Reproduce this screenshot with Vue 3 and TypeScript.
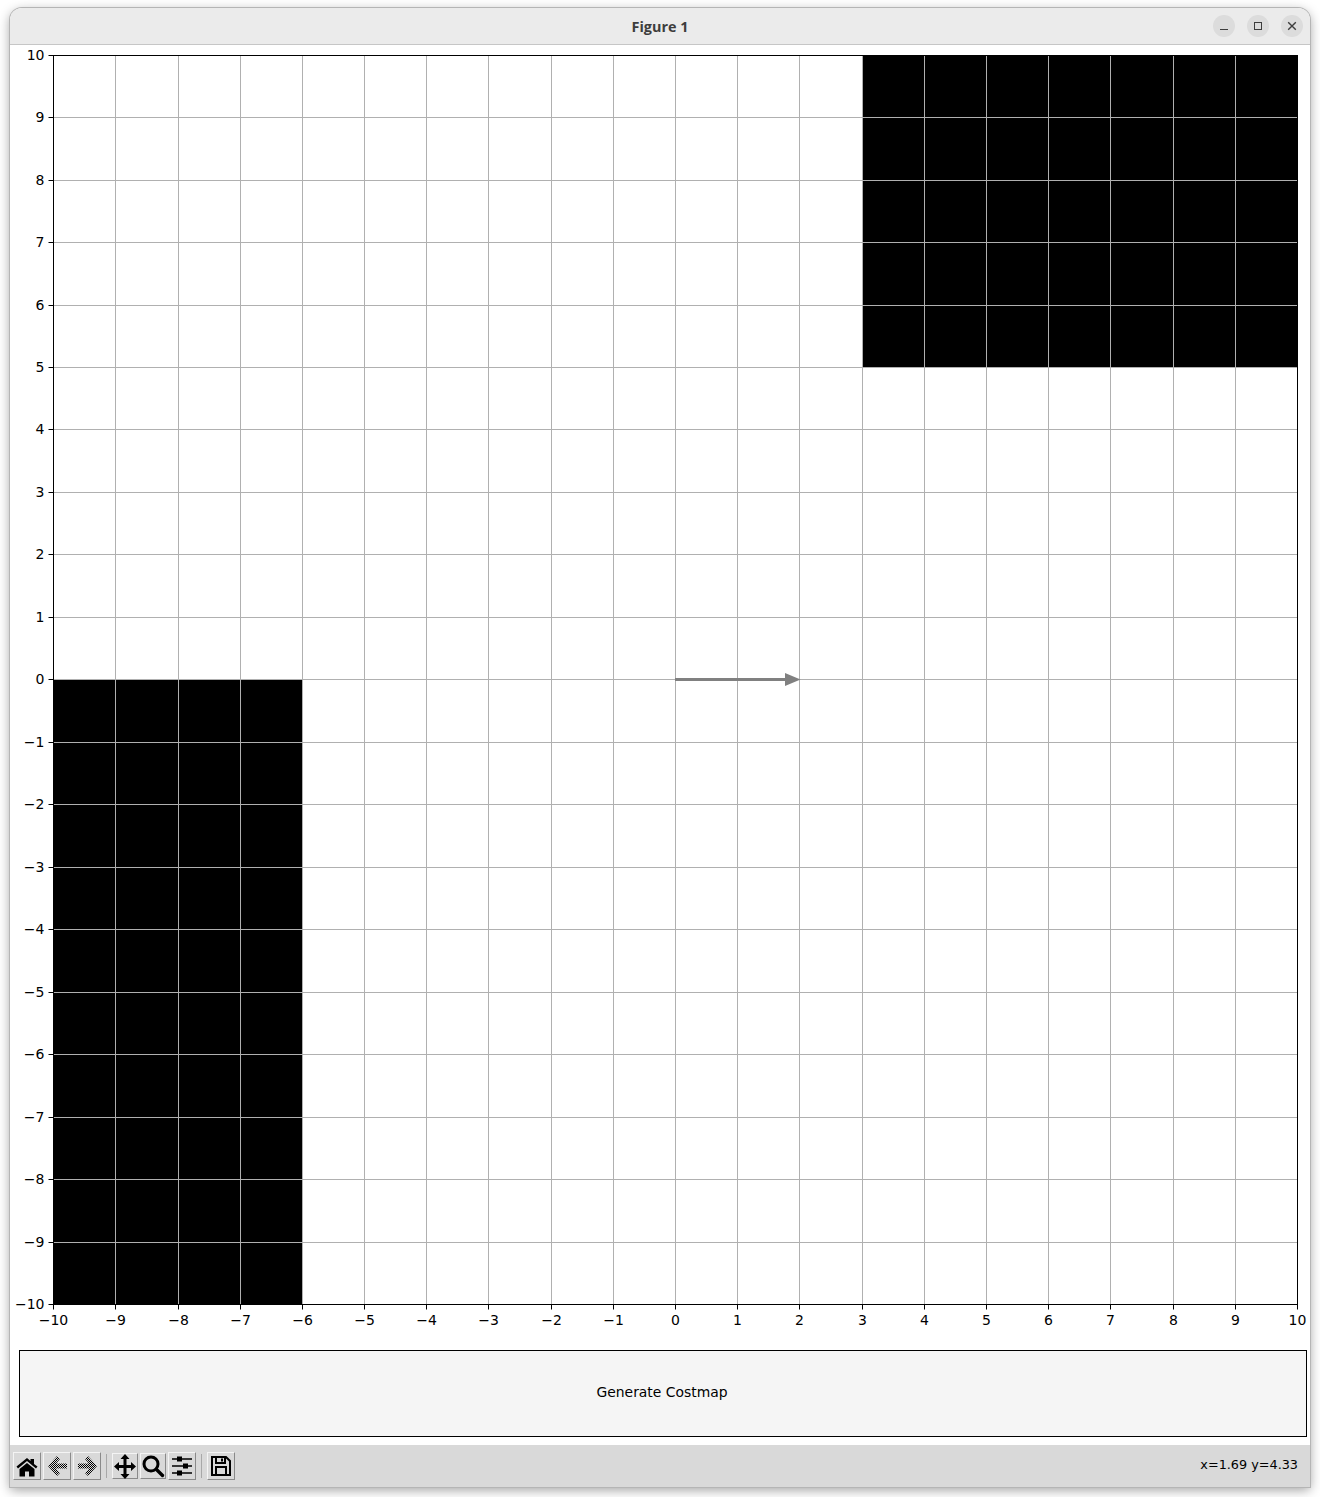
<template>
  <div class="page">
    <div class="window">
      <header class="titlebar">
        <span class="title">Figure 1</span>
        <div class="win-btns">
          <button class="win-btn">
            <svg width="10" height="10" viewBox="0 0 10 10"><path d="M1 8.500h8" stroke="#3d3d3d" stroke-width="1" fill="none" /></svg>
          </button>
          <button class="win-btn">
            <svg width="10" height="10" viewBox="0 0 10 10"><rect x="1.500" y="1.500" width="7" height="7" stroke="#3d3d3d" stroke-width="1" fill="none" /></svg>
          </button>
          <button class="win-btn">
            <svg width="10" height="10" viewBox="0 0 10 10"><path d="M1.200 1.200l7.600 7.600M8.800 1.200l-7.600 7.600" stroke="#3d3d3d" stroke-width="1.400" fill="none" /></svg>
          </button>
        </div>
      </header>

      <main class="figure">
        <svg class="plot" width="1298" height="1305" viewBox="0 0 1298 1305">
          <g transform="translate(-11 -45)">
            <rect class="obstacle" :x="px(3)" :y="py(10)" :width="px(10) - px(3)" :height="py(5) - py(10)" />
            <rect class="obstacle" :x="px(-10)" :y="py(0)" :width="px(-6) - px(-10)" :height="py(-10) - py(0)" />

            <g v-for="t in ticks" :key="t">
              <line class="grid" :x1="px(t)" :x2="px(t)" :y1="py(10)" :y2="py(-10)" />
              <line class="grid" :x1="px(-10)" :x2="px(10)" :y1="py(t)" :y2="py(t)" />
              <line class="tick" :x1="px(t)" :x2="px(t)" :y1="py(-10)" :y2="py(-10) + 5" />
              <line class="tick" :x1="px(-10) - 5" :x2="px(-10)" :y1="py(t)" :y2="py(t)" />
              <text class="label" :x="px(t)" :y="py(-10) + 20.500" text-anchor="middle">{{ fmt(t) }}</text>
              <text class="label" :x="px(-10) - 9" :y="py(t) + 4.500" text-anchor="end">{{ fmt(t) }}</text>
            </g>

            <rect class="frame" :x="px(-10)" :y="py(10)" :width="px(10) - px(-10)" :height="py(-10) - py(10)" />

            <path d="M675 678H785V673L800.500 679.500L785 686V681H675Z" fill="#808080" />
          </g>
        </svg>
        <button class="gen-btn">Generate Costmap</button>
      </main>

      <footer class="toolbar">
        <div class="tools">
          <button class="tool">
            <svg width="24" height="22" viewBox="0 0 24 22">
              <path d="M1.500 11.500L12 3l3.500 3V4h3.500v5l3.500 2.500-1.500 2L12 6 3 13.500z" fill="#000" />
              <path d="M4.500 14L12 8l7.500 6v7.500h-5.500v-5h-4v5H4.500z" fill="#000" />
            </svg>
          </button>
          <button class="tool">
            <svg width="24" height="22" viewBox="0 0 24 22">
              <defs>
                <pattern id="dither" width="2" height="2" patternUnits="userSpaceOnUse">
                  <rect width="1" height="1" fill="#000" />
                  <rect x="1" y="1" width="1" height="1" fill="#000" />
                </pattern>
              </defs>
              <path d="M3 11L12 1l3 3-4 4.500h11v5H11l4 4.500-3 3z" fill="url(#dither)" />
            </svg>
          </button>
          <button class="tool">
            <svg width="24" height="22" viewBox="0 0 24 22">
              <path d="M22 11L13 1l-3 3 4 4.500H3v5h11l-4 4.500 3 3z" fill="url(#dither)" />
            </svg>
          </button>
          <span class="sep" />
          <button class="tool narrow">
            <svg width="24" height="25" viewBox="0 0 24 25">
              <path d="M12 0l4.500 5h-3v6H18V8l5 4.500-5 4.500v-3h-4.500v6h3L12 25l-4.500-5h3v-6H6v3L1 12.500 6 8v3h4.500V5h-3z" fill="#000" />
            </svg>
          </button>
          <button class="tool narrow">
            <svg width="24" height="24" viewBox="0 0 24 24">
              <circle cx="10" cy="10" r="7" fill="none" stroke="#000" stroke-width="3" />
              <path d="M15.500 15.500L21.500 21.500" stroke="#000" stroke-width="3.400" stroke-linecap="round" />
            </svg>
          </button>
          <button class="tool">
            <svg width="24" height="24" viewBox="0 0 24 24">
              <path d="M2 5h20M2 12h20M2 19h20" stroke="#000" stroke-width="1.700" />
              <rect x="7" y="2.500" width="5" height="5" fill="#000" />
              <rect x="13" y="9.500" width="5" height="5" fill="#000" />
              <rect x="7" y="16.500" width="5" height="5" fill="#000" />
            </svg>
          </button>
          <span class="sep" />
          <button class="tool">
            <svg width="24" height="24" viewBox="0 0 24 24">
              <path d="M3 3h14l4 4v14H3z" fill="none" stroke="#000" stroke-width="2" />
              <path d="M7 3v6h9V3" fill="none" stroke="#000" stroke-width="2" />
              <rect x="12" y="4.500" width="2" height="3" fill="#000" />
              <path d="M7 21v-8h10v8" fill="none" stroke="#000" stroke-width="2" />
            </svg>
          </button>
        </div>
        <span class="coords">x=1.69 y=4.33</span>
      </footer>
    </div>
  </div>
</template>

<script setup lang="ts">
// axis range is -10..10 on both sides
const ticks: number[] = Array.from({ length: 21 }, (_, i) => i - 10)

const px = (v: number) => Math.floor(53.62 + (v + 10) * 62.19) + 0.5
const py = (v: number) => Math.round(679.35 - v * 62.47) + 0.5
const fmt = (v: number) => (v < 0 ? '\u2212' + Math.abs(v) : String(v))
</script>

<style scoped>
.page { width: 1320px; height: 1497px; padding: 8px 10px 10px; box-sizing: border-box; background: #fff; overflow: hidden; }
.window { width: 1300px; height: 1479px; display: flex; flex-direction: column; background: #fff; border-radius: 12px 12px 0 0; box-shadow: 0 0 0 1px #b5b5b5, 0 3px 12px rgba(0, 0, 0, 0.38); font-family: "DejaVu Sans", sans-serif; overflow: hidden; }

.titlebar { height: 37px; flex-shrink: 0; position: relative; display: flex; align-items: center; justify-content: center; background: #ebebeb; border-bottom: 1px solid #c6c6c6; box-sizing: border-box; }
.title { font-family: "Open Sans", sans-serif; font-size: 14.400px; font-weight: 700; color: #3d3d3d; }
.win-btns { position: absolute; right: 7px; top: 7px; display: flex; gap: 12px; }
.win-btn { width: 22px; height: 22px; padding: 0; border: 0; border-radius: 50%; background: #dcdcdc; display: flex; align-items: center; justify-content: center; }

.figure { flex: 1; display: flex; flex-direction: column; padding-left: 1px; }
.plot { display: block; flex-shrink: 0; }
.obstacle { fill: #000; }
.grid { stroke: #b0b0b0; stroke-width: 1; }
.tick { stroke: #000; stroke-width: 1; }
.frame { fill: none; stroke: #000; stroke-width: 1; }
.label { font-family: "DejaVu Sans", sans-serif; font-size: 14px; fill: #000; }

.gen-btn { width: 1288px; height: 87px; margin-left: 8px; padding: 0 2px 4px 0; border: 1px solid #000; background: #f5f5f5; font-family: "DejaVu Sans", sans-serif; font-size: 13.900px; color: #000; flex-shrink: 0; }

.toolbar { height: 42px; flex-shrink: 0; display: flex; align-items: center; justify-content: space-between; padding: 0 12px 0 3px; background: #d9d9d9; box-sizing: border-box; }
.tools { display: flex; align-items: center; gap: 2px; }
.tool { width: 28px; height: 28px; padding: 0; background: #d9d9d9; border: 1px solid; border-color: #f4f4f4 #8a8a8a #8a8a8a #f4f4f4; display: flex; align-items: center; justify-content: center; box-sizing: border-box; }
.tool.narrow { width: 26px; height: 26px; }
.sep { width: 1px; height: 24px; margin: 0 3px; background: #a8a8a8; }
.coords { font-size: 12.800px; color: #000; padding-bottom: 3px; }
</style>
